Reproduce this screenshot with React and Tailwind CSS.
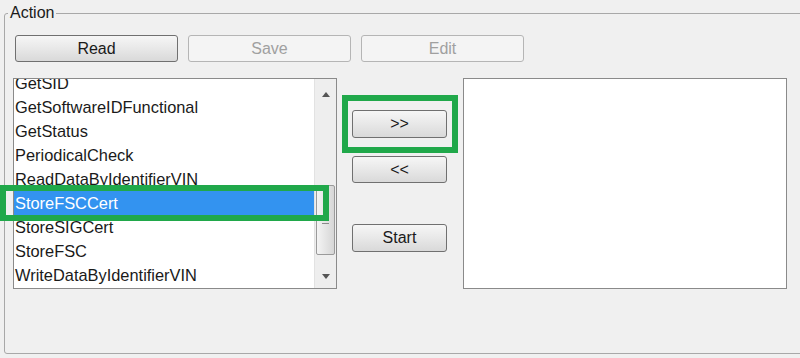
import React from 'react';

const items = [
  'GetSID',
  'GetSoftwareIDFunctional',
  'GetStatus',
  'PeriodicalCheck',
  'ReadDataByIdentifierVIN',
  'StoreFSCCert',
  'StoreSIGCert',
  'StoreFSC',
  'WriteDataByIdentifierVIN',
];

function WinButton({ children, disabled, className = '' }) {
  return (
    <button
      className={`h-[27px] rounded-[3px] border text-[16px] leading-none ${
        disabled
          ? 'border-[#b5b5b5] bg-[#f4f4f4] text-[#a0a0a0]'
          : 'border-[#707070] bg-gradient-to-b from-[#f6f6f6] via-[#e8e8e8] to-[#d9d9d9] text-[#1a1a1a]'
      } ${className}`}
    >
      {children}
    </button>
  );
}

export default function App() {
  return (
    <div className="relative w-[800px] h-[358px] overflow-hidden bg-[#f0f0f0] font-['Liberation_Sans',Arial,sans-serif]">
      <fieldset className="mt-[4px] ml-[4px] w-[800px] h-[350px] border border-[#a8a8a8] rounded-[3px]">
        <legend className="ml-[3px] px-[2px] text-[16px] leading-[18px] text-[#1a1a1a]">Action</legend>

        {/* top buttons */}
        <div className="flex gap-[10px] pl-[10px] pt-[13px]">
          <WinButton className="w-[163px]">Read</WinButton>
          <WinButton disabled className="w-[163px]">Save</WinButton>
          <WinButton disabled className="w-[163px]">Edit</WinButton>
        </div>

        <div className="flex pl-[8px] mt-[16px]">
          {/* left list */}
          <div className="flex w-[324px] h-[211px] border border-[#8a8a8a] bg-white overflow-hidden">
            <div className="flex-1 overflow-hidden">
              <div className="-mt-[8px]">
                {items.map((it) => (
                  <div
                    key={it}
                    className={`h-[24px] pl-[1px] text-[16.4px] leading-[24px] whitespace-nowrap ${
                      it === 'StoreFSCCert' ? 'bg-[#3393f0] text-white' : 'text-[#1a1a1a]'
                    }`}
                  >
                    {it}
                  </div>
                ))}
              </div>
            </div>
            {/* scrollbar */}
            <div className="w-[22px] flex flex-col bg-[#eeeeee] border-l border-[#e2e2e2]">
              <div className="h-[24px] flex items-center justify-center pt-[6px]">
                <svg width="8" height="5" viewBox="0 0 8 5"><path d="M0 5 L4 0 L8 5 Z" fill="#555" /></svg>
              </div>
              <div className="h-[82px]" />
              <div className="mx-[1px] h-[70px] rounded-[2px] border border-[#9a9a9a] bg-gradient-to-r from-[#f4f4f4] to-[#d6d6d6] flex flex-col items-center justify-center gap-[2px]">
                <div className="w-[7px] h-[1px] bg-[#8a8a8a]" />
                <div className="w-[7px] h-[1px] bg-[#8a8a8a]" />
                <div className="w-[7px] h-[1px] bg-[#8a8a8a]" />
              </div>
              <div className="flex-1 flex items-end justify-center pb-[9px]">
                <svg width="8" height="5" viewBox="0 0 8 5"><path d="M0 0 L8 0 L4 5 Z" fill="#555" /></svg>
              </div>
            </div>
          </div>

          {/* middle buttons */}
          <div className="flex flex-col ml-[15px] pt-[32px]">
            <WinButton className="w-[95px] h-[28px]">&gt;&gt;</WinButton>
            <WinButton className="w-[95px] mt-[18px]">&lt;&lt;</WinButton>
            <WinButton className="w-[95px] h-[28px] mt-[41px]">Start</WinButton>
          </div>

          {/* right list */}
          <div className="ml-[16px] w-[324px] h-[211px] border border-[#8a8a8a] bg-white" />
        </div>
      </fieldset>

      {/* green highlight annotations */}
      <div className="absolute left-0 top-[185px] w-[329px] h-[36px] border-[6px] border-[#20a84a]" />
      <div className="absolute left-[342px] top-[95px] w-[116px] h-[58px] border-[6px] border-[#20a84a]" />
    </div>
  );
}
